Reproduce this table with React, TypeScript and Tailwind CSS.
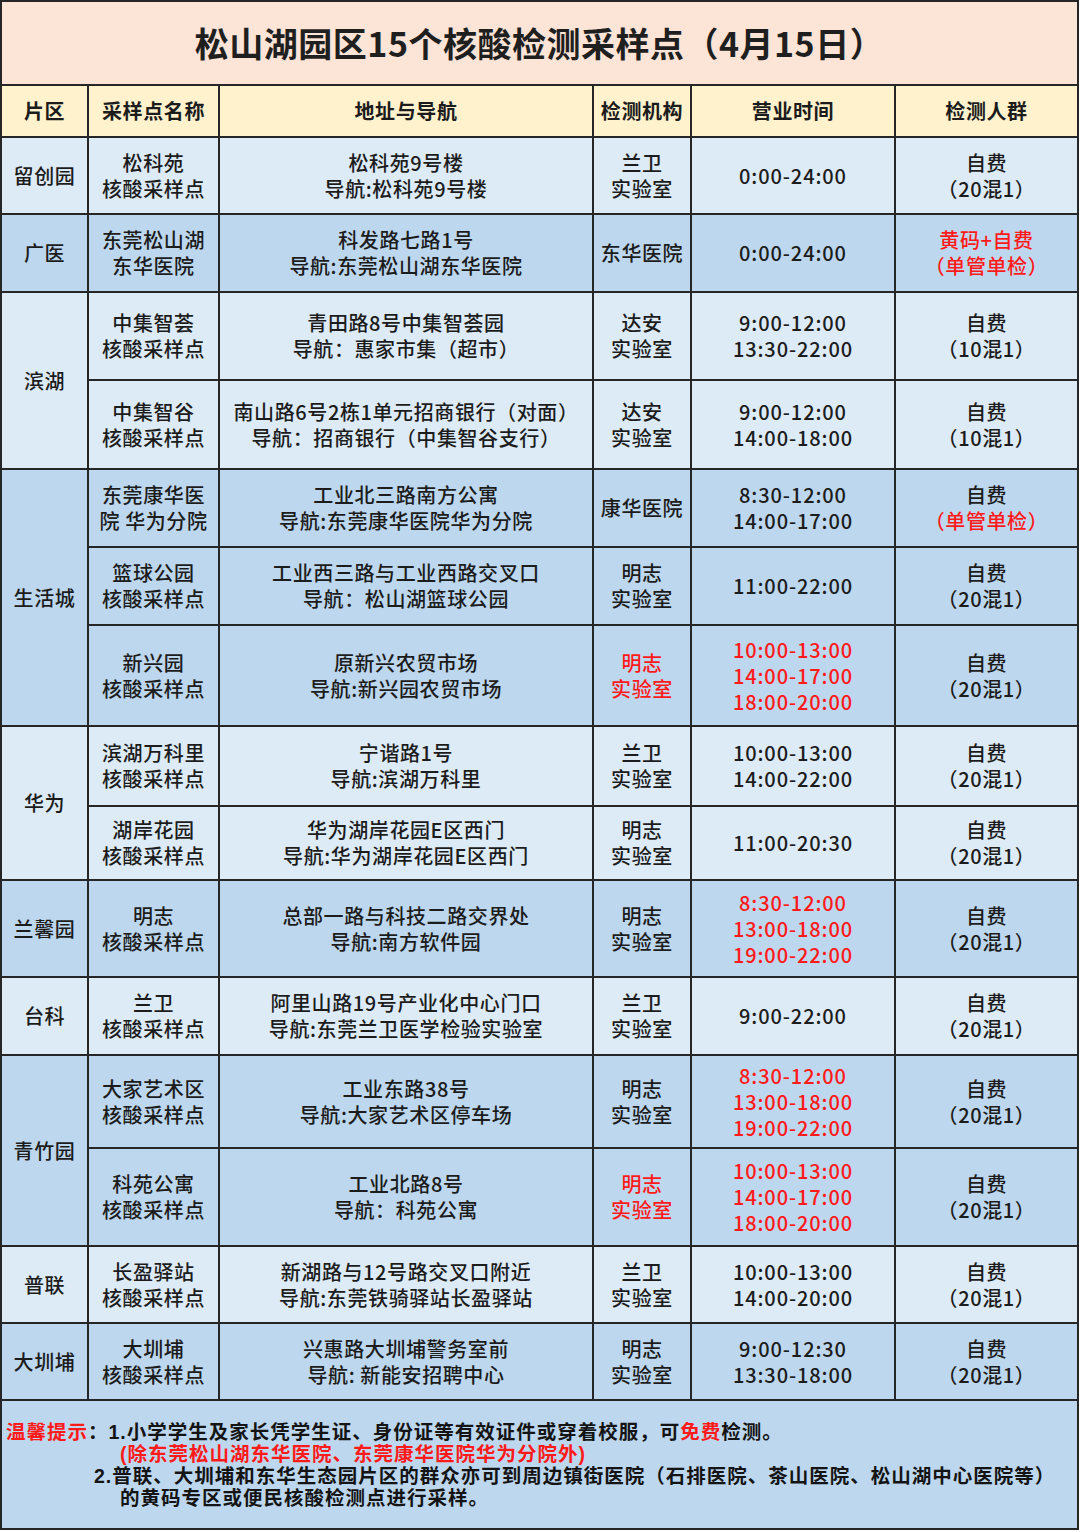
import clsx from "clsx";

type Line = { t: string; red?: boolean };

type Site = {
  name: string[];
  addr: string[];
  org: string[];
  orgRed?: boolean;
  time: string[];
  timeRed?: boolean;
  crowd: Line[];
};

type Zone = { area: string; dark: boolean; sites: Site[] };

const mix20: Line[] = [{ t: "自费" }, { t: "（20混1）" }];
const mix10: Line[] = [{ t: "自费" }, { t: "（10混1）" }];
const lab = (who: string) => [who, "实验室"];

const zones: Zone[] = [
  {
    area: "留创园",
    dark: false,
    sites: [
      {
        name: ["松科苑", "核酸采样点"],
        addr: ["松科苑9号楼", "导航:松科苑9号楼"],
        org: lab("兰卫"),
        time: ["0:00-24:00"],
        crowd: mix20,
      },
    ],
  },
  {
    area: "广医",
    dark: true,
    sites: [
      {
        name: ["东莞松山湖", "东华医院"],
        addr: ["科发路七路1号", "导航:东莞松山湖东华医院"],
        org: ["东华医院"],
        time: ["0:00-24:00"],
        crowd: [
          { t: "黄码+自费", red: true },
          { t: "（单管单检）", red: true },
        ],
      },
    ],
  },
  {
    area: "滨湖",
    dark: false,
    sites: [
      {
        name: ["中集智荟", "核酸采样点"],
        addr: ["青田路8号中集智荟园", "导航：惠家市集（超市）"],
        org: lab("达安"),
        time: ["9:00-12:00", "13:30-22:00"],
        crowd: mix10,
      },
      {
        name: ["中集智谷", "核酸采样点"],
        addr: ["南山路6号2栋1单元招商银行（对面）", "导航：招商银行（中集智谷支行）"],
        org: lab("达安"),
        time: ["9:00-12:00", "14:00-18:00"],
        crowd: mix10,
      },
    ],
  },
  {
    area: "生活城",
    dark: true,
    sites: [
      {
        name: ["东莞康华医", "院 华为分院"],
        addr: ["工业北三路南方公寓", "导航:东莞康华医院华为分院"],
        org: ["康华医院"],
        time: ["8:30-12:00", "14:00-17:00"],
        crowd: [{ t: "自费" }, { t: "（单管单检）", red: true }],
      },
      {
        name: ["篮球公园", "核酸采样点"],
        addr: ["工业西三路与工业西路交叉口", "导航：松山湖篮球公园"],
        org: lab("明志"),
        time: ["11:00-22:00"],
        crowd: mix20,
      },
      {
        name: ["新兴园", "核酸采样点"],
        addr: ["原新兴农贸市场", "导航:新兴园农贸市场"],
        org: lab("明志"),
        orgRed: true,
        time: ["10:00-13:00", "14:00-17:00", "18:00-20:00"],
        timeRed: true,
        crowd: mix20,
      },
    ],
  },
  {
    area: "华为",
    dark: false,
    sites: [
      {
        name: ["滨湖万科里", "核酸采样点"],
        addr: ["宁谐路1号", "导航:滨湖万科里"],
        org: lab("兰卫"),
        time: ["10:00-13:00", "14:00-22:00"],
        crowd: mix20,
      },
      {
        name: ["湖岸花园", "核酸采样点"],
        addr: ["华为湖岸花园E区西门", "导航:华为湖岸花园E区西门"],
        org: lab("明志"),
        time: ["11:00-20:30"],
        crowd: mix20,
      },
    ],
  },
  {
    area: "兰馨园",
    dark: true,
    sites: [
      {
        name: ["明志", "核酸采样点"],
        addr: ["总部一路与科技二路交界处", "导航:南方软件园"],
        org: lab("明志"),
        time: ["8:30-12:00", "13:00-18:00", "19:00-22:00"],
        timeRed: true,
        crowd: mix20,
      },
    ],
  },
  {
    area: "台科",
    dark: false,
    sites: [
      {
        name: ["兰卫", "核酸采样点"],
        addr: ["阿里山路19号产业化中心门口", "导航:东莞兰卫医学检验实验室"],
        org: lab("兰卫"),
        time: ["9:00-22:00"],
        crowd: mix20,
      },
    ],
  },
  {
    area: "青竹园",
    dark: true,
    sites: [
      {
        name: ["大家艺术区", "核酸采样点"],
        addr: ["工业东路38号", "导航:大家艺术区停车场"],
        org: lab("明志"),
        time: ["8:30-12:00", "13:00-18:00", "19:00-22:00"],
        timeRed: true,
        crowd: mix20,
      },
      {
        name: ["科苑公寓", "核酸采样点"],
        addr: ["工业北路8号", "导航：科苑公寓"],
        org: lab("明志"),
        orgRed: true,
        time: ["10:00-13:00", "14:00-17:00", "18:00-20:00"],
        timeRed: true,
        crowd: mix20,
      },
    ],
  },
  {
    area: "普联",
    dark: false,
    sites: [
      {
        name: ["长盈驿站", "核酸采样点"],
        addr: ["新湖路与12号路交叉口附近", "导航:东莞铁骑驿站长盈驿站"],
        org: lab("兰卫"),
        time: ["10:00-13:00", "14:00-20:00"],
        crowd: mix20,
      },
    ],
  },
  {
    area: "大圳埔",
    dark: true,
    sites: [
      {
        name: ["大圳埔", "核酸采样点"],
        addr: ["兴惠路大圳埔警务室前", "导航: 新能安招聘中心"],
        org: lab("明志"),
        time: ["9:00-12:30", "13:30-18:00"],
        crowd: mix20,
      },
    ],
  },
];

const spans: Record<number, string> = { 1: "", 2: "row-span-2", 3: "row-span-3" };
const headers = ["片区", "采样点名称", "地址与导航", "检测机构", "营业时间", "检测人群"];

function Cell({ className, children }: { className?: string; children: React.ReactNode }) {
  return (
    <div
      className={clsx(
        "flex flex-col items-center justify-center border-r-2 border-b-2 border-[#262626] text-center",
        className
      )}
    >
      {children}
    </div>
  );
}

function Lines({ lines, red }: { lines: string[]; red?: boolean }) {
  return (
    <>
      {lines.map((l) => (
        <span key={l} className={clsx("whitespace-pre", red && "text-[#ff1a1a]")}>
          {l}
        </span>
      ))}
    </>
  );
}

export default function App() {
  return (
    <div className="min-h-[1532px] w-[1080px] bg-white font-['Noto_Sans_CJK_SC','Noto_Sans',sans-serif] text-[#1c1c1c]">
      <div className="grid w-[1079px] grid-cols-[87px_131px_374px_98px_204px_183px] grid-rows-[84px_52px_77px_78px_88px_89px_78px_78px_101px_80px_74px_97px_78px_93px_98px_77px_77px_129px] border-t-2 border-l-2 border-[#262626]">
        <Cell className="col-span-6 bg-[#fce4d6]">
          <h1 className="text-[34px] leading-[40px] font-bold tracking-[0.5px] text-[#1f1f1f]">
            松山湖园区15个核酸检测采样点（4月15日）
          </h1>
        </Cell>

        {headers.map((h) => (
          <Cell key={h} className="bg-[#fff2cc] text-[20px] font-bold tracking-[0.6px]">
            {h}
          </Cell>
        ))}

        {zones.map((z) => {
          const bg = z.dark ? "bg-[#bdd7ee]" : "bg-[#ddebf7]";
          const body = clsx(bg, "text-[20px] leading-[26px] font-medium tracking-[0.6px]");
          return z.sites.map((s, i) => (
            <div key={z.area + i} className="contents">
              {i === 0 && (
                <Cell className={clsx(body, spans[z.sites.length])}>{z.area}</Cell>
              )}
              <Cell className={body}>
                <Lines lines={s.name} />
              </Cell>
              <Cell className={body}>
                <Lines lines={s.addr} />
              </Cell>
              <Cell className={body}>
                <Lines lines={s.org} red={s.orgRed} />
              </Cell>
              <Cell className={clsx(body, "tracking-[0.9px]")}>
                <Lines lines={s.time} red={s.timeRed} />
              </Cell>
              <Cell className={body}>
                {s.crowd.map((c) => (
                  <span key={c.t} className={clsx(c.red && "text-[#ff1a1a]")}>
                    {c.t}
                  </span>
                ))}
              </Cell>
            </div>
          ));
        })}

        <div className="col-span-6 flex flex-col justify-center border-r-2 border-b-2 border-[#262626] bg-[#bdd7ee] font-['Liberation_Sans','Noto_Sans_CJK_SC',sans-serif] text-[19.5px] leading-[22px] font-bold tracking-[1px] text-[#141414]">
          <p className="pl-[4px]">
            <span className="text-[#ff1a1a]">温馨提示</span>：1.小学学生及家长凭学生证、身份证等有效证件或穿着校服，可
            <span className="text-[#ff1a1a]">免费</span>检测。
          </p>
          <p className="pl-[118px] text-[#ff1a1a]">(除东莞松山湖东华医院、东莞康华医院华为分院外)</p>
          <p className="pl-[92px]">
            2.普联、大圳埔和东华生态园片区的群众亦可到周边镇街医院（石排医院、茶山医院、松山湖中心医院等）
          </p>
          <p className="pl-[118px]">的黄码专区或便民核酸检测点进行采样。</p>
        </div>
      </div>
    </div>
  );
}
